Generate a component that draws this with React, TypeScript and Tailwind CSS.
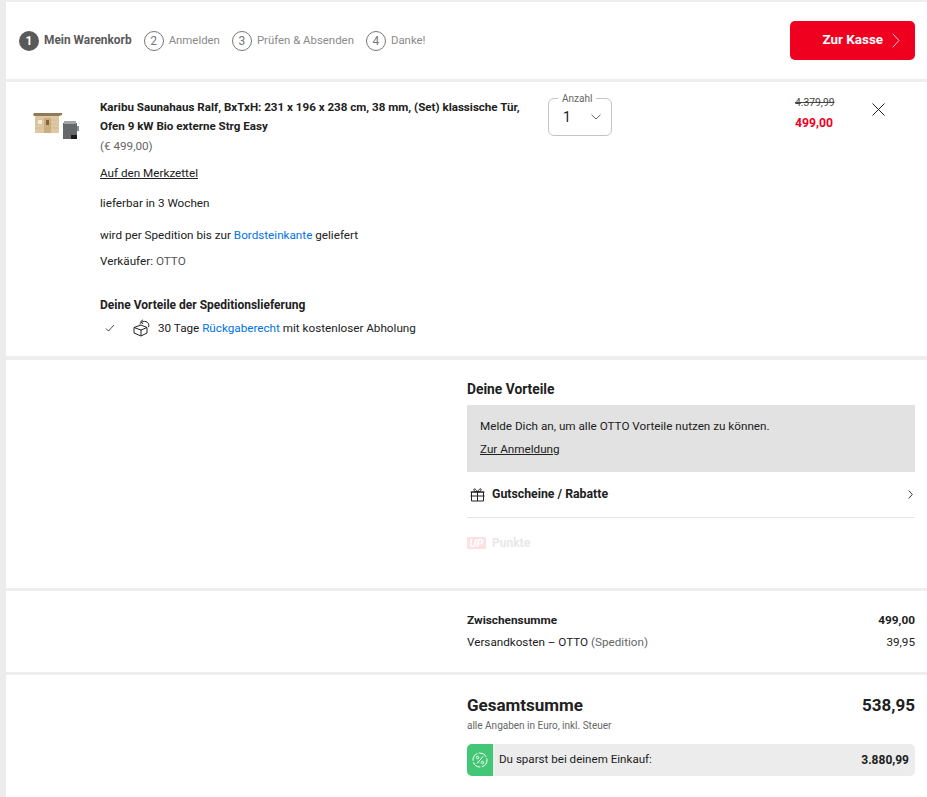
const Step = ({ n, label, active }: { n: number; label: string; active?: boolean }) => (
  <div className="flex items-center gap-[5px]">
    {active ? (
      <span className="flex h-[20px] w-[20px] items-center justify-center rounded-full bg-[#5a5a5a] text-[12px] font-bold text-white">
        {n}
      </span>
    ) : (
      <span className="flex h-[20px] w-[20px] items-center justify-center rounded-full border border-[#777] text-[12px] text-[#777]">
        {n}
      </span>
    )}
    <span className={active ? "text-[11.9px] font-bold text-[#5a5a5a]" : "text-[11.4px] text-[#8a8a8a]"}>{label}</span>
  </div>
)

const SaunaThumb = () => (
  <svg width="47" height="28" viewBox="0 0 47 28">
    <path d="M0 3 1 1h28v2l-3 1H1z" fill="#8f7a55" />
    <rect x="2" y="4" width="24" height="17" fill="#dcc8a2" />
    <path d="M2 8h24M2 12h24M2 16h24" stroke="#cdb78e" strokeWidth="0.6" />
    <rect x="11" y="6" width="7" height="15" fill="#c9ae80" />
    <rect x="13" y="8" width="3" height="5" fill="#8a6236" />
    <rect x="5" y="8" width="4" height="4" fill="#f3ead8" />
    <rect x="30" y="11" width="14" height="16" fill="#66686a" />
    <rect x="31" y="9" width="12" height="3" fill="#a2a4a6" />
    <rect x="44" y="14" width="2" height="5" fill="#8a8c8e" />
    <rect x="38" y="23" width="6" height="4" fill="#1c1c1c" />
  </svg>
)

const ReturnBox = () => (
  <svg width="18" height="18" viewBox="0 0 18 18" fill="none" stroke="#222" strokeWidth="1">
    <path d="M1 8.5 8 6l6 2.5v5.5L8 17l-7-3z" />
    <path d="M1 8.5 8 11l6-2.5M8 11v6" />
    <path d="M6.5 5C8.5 2.8 11 2 13 2.6c2.4.8 3.4 3 2.6 5.4" />
    <path d="M10 .8 7.6 2.8l2.4 2" />
  </svg>
)

const PercentBadge = () => (
  <svg width="16" height="16" viewBox="0 0 16 16" fill="none" stroke="#fff" strokeWidth="1">
    <circle cx="8" cy="8" r="7" strokeDasharray="9 1.5" />
    <path d="M5 11.5 11 4.5" />
    <circle cx="5.5" cy="5.5" r="1.2" />
    <circle cx="10.5" cy="10.5" r="1.2" />
  </svg>
)

const GiftIcon = () => (
  <svg width="15" height="15" viewBox="0 0 15 15" fill="none" stroke="#222" strokeWidth="1">
    <path d="M1.5 5h12v9h-12zM.5 5h14M.5 9h14M7.500 5v9" />
    <path d="M7.500 5C6 2 4 1 3.800 2.500 3.600 4 6 5 7.500 5c1.500 0 3.900-1 3.700-2.500C11 1 9 2 7.500 5z" />
  </svg>
)

export default function App() {
  return (
    <div className="min-h-[797px] border-l-[6px] border-[#ececec] bg-white text-[11.7px] text-[#212121] [font-family:Roboto,sans-serif]">
      <header className="flex h-[79px] items-center justify-between border-t-[2px] border-[#eeeeee] pl-[13px] pr-[12px]">
        <div className="flex items-center gap-[12px] pt-[1px]">
          <Step n={1} label="Mein Warenkorb" active />
          <Step n={2} label="Anmelden" />
          <Step n={3} label="Prüfen & Absenden" />
          <Step n={4} label="Danke!" />
        </div>
        <button className="flex h-[39px] w-[125px] items-center justify-end gap-[9px] rounded-[5px] bg-[#f0001f] pr-[15px] text-[13.4px] font-bold text-white">
          Zur Kasse
          <svg width="8" height="15" viewBox="0 0 8 15" fill="none" stroke="#fff" strokeWidth="0.8">
            <path d="M.7.7 7 7.500.7 14.300" />
          </svg>
        </button>
      </header>

      <section className="flex h-[277px] border-t-[3px] border-[#eeeeee] pl-[27px]">
        <div className="mt-[30px] w-[67px] shrink-0">
          <SaunaThumb />
        </div>
        <div className="w-[448px] shrink-0 pt-[16px]">
          <h2 className="w-[430px] text-[11.6px] leading-[19px] font-bold">
            Karibu Saunahaus Ralf, BxTxH: 231 x 196 x 238 cm, 38 mm, (Set) klassische Tür, Ofen 9 kW Bio externe Strg Easy
          </h2>
          <p className="mt-[1px] leading-[18px] text-[#666]">(€ 499,00)</p>
          <a className="mt-[9px] block leading-[18px] underline">Auf den Merkzettel</a>
          <p className="mt-[12px] leading-[18px]">lieferbar in 3 Wochen</p>
          <p className="mt-[14px] leading-[18px]">
            wird per Spedition bis zur <span className="text-[#0073e6]">Bordsteinkante</span> geliefert
          </p>
          <p className="mt-[8px] leading-[18px]">
            Verkäufer: <span className="text-[#555]">OTTO</span>
          </p>
          <h3 className="mt-[26px] text-[12px] leading-[18px] font-bold">Deine Vorteile der Speditionslieferung</h3>
          <div className="mt-[5px] flex items-center">
            <svg width="10" height="8" viewBox="0 0 10 8" fill="none" stroke="#333" strokeWidth="0.9" className="ml-[5px]">
              <path d="M1 4.500 3.500 7 9 1" />
            </svg>
            <span className="ml-[18px] flex">
              <ReturnBox />
            </span>
            <span className="ml-[7px] leading-[18px]">
              30 Tage <span className="text-[#0073e6]">Rückgaberecht</span> mit kostenloser Abholung
            </span>
          </div>
        </div>
        <div className="relative mt-[16px] h-[38px] w-[64px] shrink-0 rounded-[6px] border border-[#c4c4c4]">
          <span className="absolute top-[-6px] left-[9px] bg-white px-[4px] text-[10px] leading-[12px] text-[#666]">Anzahl</span>
          <div className="flex h-full items-center justify-between pr-[10px] pl-[14px] text-[14px]">
            1
            <svg width="10" height="6" viewBox="0 0 10 6" fill="none" stroke="#555" strokeWidth="0.9">
              <path d="M.5.700 5 5 9.500.700" />
            </svg>
          </div>
        </div>
        <div className="mt-[12px] ml-[183px] w-[39px] text-right">
          <p className="text-[10.3px] leading-[18px] text-[#444] line-through">4.379,99</p>
          <p className="mt-[2px] pr-[1px] text-[12.2px] leading-[18px] font-bold text-[#f0001f]">499,00</p>
        </div>
        <svg width="13" height="13" viewBox="0 0 13 13" fill="none" stroke="#222" strokeWidth="1" className="mt-[21px] ml-[38px]">
          <path d="M.5.500l12 12M12.500.500l-12 12" />
        </svg>
      </section>

      <section className="flex h-[232px] justify-end border-t-[4px] border-[#eeeeee] pr-[12px]">
        <div className="w-[448px] pt-[20px]">
          <h3 className="text-[13.800px] leading-[18px] font-bold">Deine Vorteile</h3>
          <div className="mt-[7px] h-[67px] bg-[#e2e2e2] pt-[12px] pl-[13px]">
            <p className="leading-[18px]">Melde Dich an, um alle OTTO Vorteile nutzen zu können.</p>
            <a className="mt-[5px] block leading-[18px] underline">Zur Anmeldung</a>
          </div>
          <div className="flex h-[46px] items-center justify-between border-b border-[#e5e5e5]">
            <div className="flex items-center gap-[7px]">
              <span className="ml-[3px] flex">
                <GiftIcon />
              </span>
              <span className="text-[12.3px] font-bold">Gutscheine / Rabatte</span>
            </div>
            <svg width="5" height="9" viewBox="0 0 5 9" fill="none" stroke="#222" strokeWidth="0.9" className="mr-[2px]">
              <path d="M.7.500 4.300 4.500.7 8.500" />
            </svg>
          </div>
          <div className="flex h-[50px] items-center gap-[6px]">
            <span className="flex h-[12px] w-[19px] items-center justify-center rounded-[1px] bg-[#fde0e4] text-[11px] leading-none font-bold text-white italic">UP</span>
            <span className="text-[12px] font-bold text-[#e8e8e8]">Punkte</span>
          </div>
        </div>
      </section>

      <section className="flex h-[84px] justify-end border-t-[3px] border-[#eeeeee] pr-[12px]">
        <div className="w-[448px] pt-[20px]">
          <div className="flex justify-between text-[11.8px] leading-[18px] font-bold">
            <span>Zwischensumme</span>
            <span>499,00</span>
          </div>
          <div className="mt-[4px] flex justify-between leading-[18px]">
            <span>
              Versandkosten – OTTO <span className="text-[#666]">(Spedition)</span>
            </span>
            <span>39,95</span>
          </div>
        </div>
      </section>

      <section className="flex h-[125px] justify-end border-t-[3px] border-[#eeeeee] pr-[12px]">
        <div className="w-[448px] pt-[19px]">
          <div className="flex justify-between text-[17px] leading-[22px] font-bold">
            <span>Gesamtsumme</span>
            <span>538,95</span>
          </div>
          <p className="mt-[3px] text-[10px] leading-[14px] text-[#666]">alle Angaben in Euro, inkl. Steuer</p>
          <div className="mt-[11px] flex h-[32px] items-center overflow-hidden rounded-[5px] bg-[#ececec]">
            <span className="flex h-full w-[26px] items-center justify-center bg-[#43c776]">
              <PercentBadge />
            </span>
            <span className="ml-[6px] text-[11.6px]">Du sparst bei deinem Einkauf:</span>
            <span className="mr-[6px] ml-auto text-[12px] font-bold">3.880,99</span>
          </div>
        </div>
      </section>
    </div>
  )
}
